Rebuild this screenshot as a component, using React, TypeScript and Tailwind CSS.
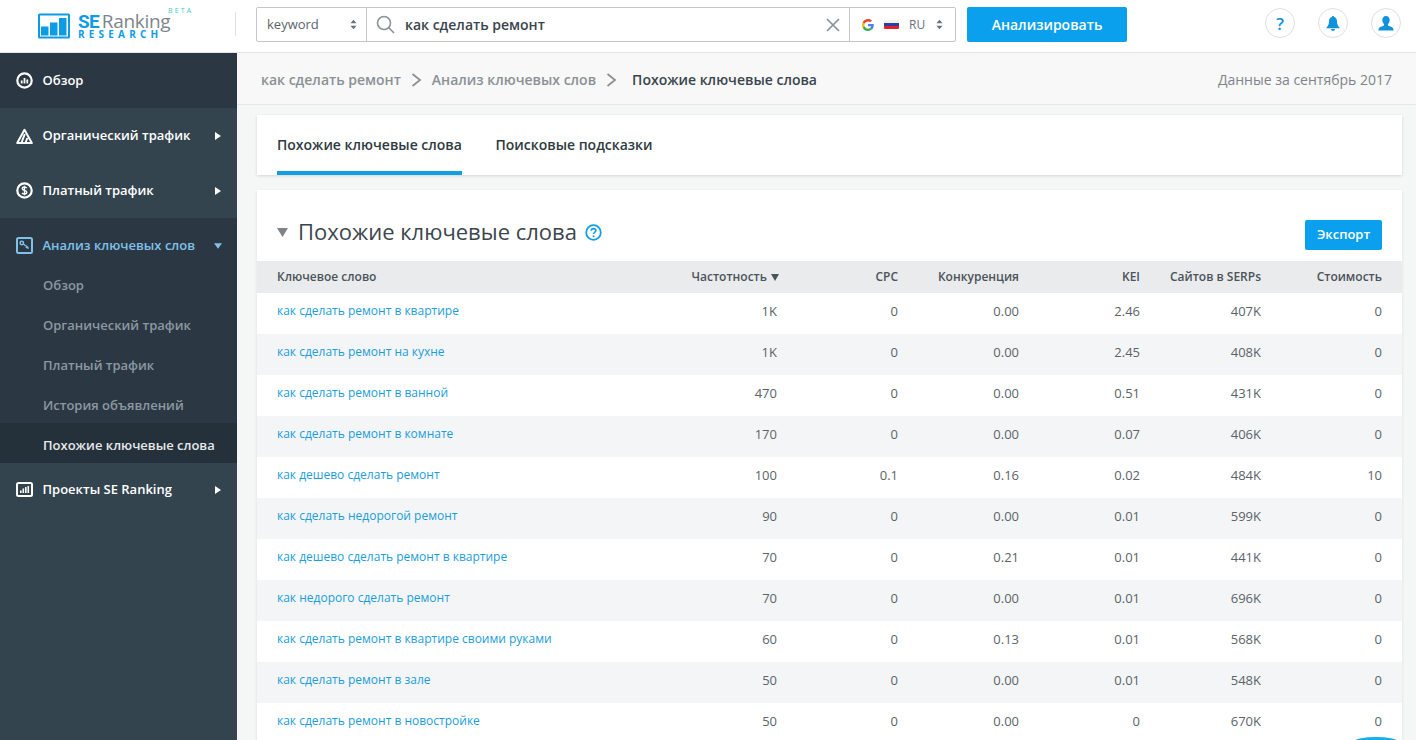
import React from "react";

const rows = [
  ["как сделать ремонт в квартире", "1K", "0", "0.00", "2.46", "407K", "0"],
  ["как сделать ремонт на кухне", "1K", "0", "0.00", "2.45", "408K", "0"],
  ["как сделать ремонт в ванной", "470", "0", "0.00", "0.51", "431K", "0"],
  ["как сделать ремонт в комнате", "170", "0", "0.00", "0.07", "406K", "0"],
  ["как дешево сделать ремонт", "100", "0.1", "0.16", "0.02", "484K", "10"],
  ["как сделать недорогой ремонт", "90", "0", "0.00", "0.01", "599K", "0"],
  ["как дешево сделать ремонт в квартире", "70", "0", "0.21", "0.01", "441K", "0"],
  ["как недорого сделать ремонт", "70", "0", "0.00", "0.01", "696K", "0"],
  ["как сделать ремонт в квартире своими руками", "60", "0", "0.13", "0.01", "568K", "0"],
  ["как сделать ремонт в зале", "50", "0", "0.00", "0.01", "548K", "0"],
  ["как сделать ремонт в новостройке", "50", "0", "0.00", "0", "670K", "0"],
];

const Updown = () => (
  <svg width="7" height="11" viewBox="0 0 8 12" className="fill-[#6b7177]">
    <path d="M4 0.5 7.5 4.5H.5zM4 11.5.5 7.500h7z" />
  </svg>
);

const ArrowR = () => (
  <svg width="6" height="8" viewBox="0 0 6 8" className="fill-white"><path d="M0 0l6 4-6 4z" /></svg>
);

const Chev = () => (
  <svg width="11" height="14" viewBox="0 0 11 14" fill="none" stroke="#8a9196" strokeWidth="1.8"><path d="M1.5 1l7.5 6-7.5 6" /></svg>
);

const IconOverview = () => (
  <svg width="17" height="17" viewBox="0 0 17 17" fill="none">
    <circle cx="8.500" cy="8.500" r="7.200" stroke="white" strokeWidth="2.200" />
    <path d="M5.700 8.500v3M8.500 6v5.500M11.300 7.500v4" stroke="white" strokeWidth="1.800" />
  </svg>
);
const IconOrganic = () => (
  <svg width="17" height="16" viewBox="0 0 17 16" fill="none">
    <path d="M8.500 1.800 15.800 15H1.200z" stroke="white" strokeWidth="2" strokeLinejoin="round" />
    <path d="M8.800 6 5.400 15M11.300 10l-1.800 5" stroke="white" strokeWidth="2" />
  </svg>
);
const IconPaid = () => (
  <svg width="17" height="17" viewBox="0 0 17 17" fill="none">
    <circle cx="8.500" cy="8.500" r="7.200" stroke="white" strokeWidth="2.200" />
    <path d="M10.800 6.200C10.300 5.400 9.400 5 8.500 5 7.300 5 6.300 5.700 6.300 6.700c0 2.200 4.500 1.200 4.500 3.500 0 1-1 1.800-2.300 1.800-1 0-1.900-.4-2.400-1.200M8.500 3.800v9.400" stroke="white" strokeWidth="1.400" />
  </svg>
);
const IconAnalysis = () => (
  <svg width="17" height="17" viewBox="0 0 17 17" fill="none" stroke="#7fc1ea">
    <rect x="1" y="1" width="15" height="15" rx="1.500" strokeWidth="2" />
    <circle cx="5.800" cy="6" r="1.700" strokeWidth="1.500" />
    <path d="M7.200 7l5 3.500M11 9.600 10 11M12.400 10.500l-.8 1.200" strokeWidth="1.500" />
  </svg>
);
const IconProjects = () => (
  <svg width="17" height="15" viewBox="0 0 17 15" fill="none">
    <rect x="1" y="1" width="15" height="13" rx="1.500" stroke="white" strokeWidth="2" />
    <path d="M4.800 11V8.500M7.300 11V6.500M9.800 11V5M12.300 11V4" stroke="white" strokeWidth="1.600" />
  </svg>
);

function NavItem({ icon, label, arrow = true, dark = false, blue = false, open = false, h = "h-[55px]" }: any) {
  return (
    <div className={`${h} flex items-center pl-[16px] pr-[16px] ${dark ? "bg-[#2b3843]" : ""}`}>
      <span className="w-[17px] flex justify-center shrink-0">{icon}</span>
      <span className={`ml-[9.500px] text-[13px] font-semibold flex-1 ${blue ? "text-[#7fc1ea]" : "text-white"}`}>{label}</span>
      {arrow && !open && <ArrowR />}
      {open && (
        <svg width="8" height="6" viewBox="0 0 9 6" className="fill-[#7fc1ea] mr-[-1px]"><path d="M0 0h9L4.500 6z" /></svg>
      )}
    </div>
  );
}

function SubItem({ label, active = false }: { label: string; active?: boolean }) {
  return (
    <div className={`h-[40px] flex items-center pl-[43px] pt-[6px] text-[13px] font-semibold ${active ? "bg-[#24303a] text-[#e6e9eb]" : "text-[#8c98a1]"}`}>
      {label}
    </div>
  );
}

const RoundBtn = ({ children }: { children: React.ReactNode }) => (
  <div className="w-[30px] h-[30px] rounded-full border border-[#dcdfe1] flex items-center justify-center">{children}</div>
);

export default function App() {
  return (
    <div className="h-screen w-full overflow-hidden relative flex flex-col bg-[#f6f7f7] text-[#3a444c] font-['Open_Sans',sans-serif]">
      {/* header */}
      <header className="h-[53px] shrink-0 bg-white border-b border-[#e2e4e5] flex items-center">
        <div className="w-[237px] shrink-0 h-full flex items-center relative">
          <div className="ml-[38px] flex items-center">
            <svg width="32" height="26" viewBox="0 0 32 26">
              <rect x="0" y="0.500" width="32" height="25" rx="1.500" fill="#0e9be6" />
              <rect x="2" y="2.500" width="28" height="21" fill="white" />
              <rect x="3" y="13.500" width="7.500" height="9" fill="#0e9be6" />
              <rect x="12" y="9.500" width="7.500" height="13" fill="#0e9be6" />
              <rect x="21" y="5" width="7.500" height="17.500" fill="#0e9be6" />
            </svg>
            <div className="ml-[8px] relative w-[92px] h-[32px]">
              <div className="absolute left-0 top-[4px] text-[19px] leading-[15px] whitespace-nowrap tracking-[-0.3px]">
                <span className="font-bold text-[#0e9be6] font-['Roboto',sans-serif] tracking-[-0.8px]">SE</span>
                <span className="text-[#7c858c] ml-[3px]">Ranking</span>
              </div>
              <div className="absolute left-0 top-[19px] text-[10px] leading-[10px] font-bold text-[#0e9be6] tracking-[4.2px] whitespace-nowrap">RESEARCH</div>
              <div className="absolute left-[90px] top-[-3px] text-[7px] leading-[7px] text-[#3fc9c4] tracking-[2.2px]">BETA</div>
            </div>
          </div>
          <div className="absolute right-[1px] top-[12px] h-[24px] w-px bg-[#dfe1e2]" />
        </div>
        <div className="ml-[19px] mb-[3px] h-[35px] w-[700px] flex border border-[#c4c7c9] rounded-[2px] bg-white">
          <div className="w-[110px] shrink-0 flex items-center justify-between pl-[10px] pr-[9px] border-r border-[#c4c7c9]">
            <span className="text-[13px] text-[#5c6369]">keyword</span>
            <Updown />
          </div>
          <div className="flex-1 flex items-center pl-[9px] pr-[9px]">
            <svg width="19" height="19" viewBox="0 0 19 19" fill="none" stroke="#8b9196" strokeWidth="1.6">
              <circle cx="8" cy="8" r="6.500" /><path d="M12.800 12.800 18 18" />
            </svg>
            <span className="ml-[10px] text-[14px] font-semibold text-[#3a444c] flex-1">как сделать ремонт</span>
            <svg width="14" height="14" viewBox="0 0 14 14" stroke="#8a9196" strokeWidth="1.700"><path d="M1 1l12 12M13 1 1 13" /></svg>
          </div>
          <div className="w-[106px] shrink-0 flex items-center pl-[12px] pr-[12px] border-l border-[#c4c7c9]">
            <svg width="12" height="12" viewBox="0 0 48 48">
              <path fill="#EA4335" d="M24 9.500c3.500 0 6.700 1.300 9.200 3.400l6.800-6.800C35.900 2.400 30.300 0 24 0 14.600 0 6.500 5.400 2.600 13.200l7.900 6.100C12.400 13.600 17.700 9.500 24 9.500z" />
              <path fill="#4285F4" d="M47 24.500c0-1.600-.2-3.200-.5-4.700H24v9h12.900c-.6 3-2.300 5.500-4.800 7.200l7.700 6C44.300 37.900 47 31.700 47 24.500z" />
              <path fill="#FBBC05" d="M10.500 28.700c-.5-1.400-.8-3-.8-4.700s.3-3.200.8-4.700l-7.900-6.100C1 16.500 0 20.100 0 24s1 7.500 2.600 10.800z" />
              <path fill="#34A853" d="M24 48c6.500 0 11.900-2.100 15.800-5.800l-7.700-6c-2.100 1.400-4.900 2.300-8.100 2.300-6.300 0-11.600-4.100-13.500-9.800l-7.900 6.100C6.500 42.600 14.600 48 24 48z" />
            </svg>
            <div className="ml-[10px] w-[15px] h-[9px] flex flex-col rounded-[1px] overflow-hidden">
              <div className="h-[3px] bg-[#f2f2f4]" /><div className="h-[3px] bg-[#2a3fa5]" /><div className="h-[3px] bg-[#e0202f]" />
            </div>
            <span className="ml-[10px] text-[12px] text-[#6b7177] flex-1">RU</span>
            <Updown />
          </div>
        </div>
        <div className="ml-[11px] mb-[3px] w-[160px] h-[35px] rounded-[2px] bg-[#0ba0ee] text-white text-[14px] font-semibold flex items-center justify-center">Анализировать</div>
        <div className="ml-auto mr-[15px] mb-[6px] flex gap-[23px]">
          <RoundBtn><span className="text-[17px] font-semibold text-[#1192dc] leading-none">?</span></RoundBtn>
          <RoundBtn>
            <svg width="14" height="15" viewBox="0 0 14 15" fill="#1192dc"><path d="M7 0c.7 0 1.100.5 1.100 1.100C10 1.600 11 3.200 11 5.200c0 3.300 1 4.800 2.500 6.300v.8H.5v-.8C2 10 3 8.500 3 5.200 3 3.200 4 1.600 5.900 1.100 5.900.5 6.300 0 7 0zM5 13h4a2 2 0 0 1-4 0z" /></svg>
          </RoundBtn>
          <RoundBtn>
            <svg width="16" height="15" viewBox="0 0 16 15" fill="#1192dc"><path d="M8 0c2.300 0 3.700 1.700 3.700 4 0 1.600-.7 3.200-1.700 4.200v1.300c2 .8 5 1.700 5.500 3.500v1.500H.5V13C1 11.200 4 10.300 6 9.500V8.200C5 7.200 4.300 5.600 4.300 4 4.300 1.700 5.700 0 8 0z" /></svg>
          </RoundBtn>
        </div>
      </header>

      <div className="flex-1 min-h-0 flex">
        {/* sidebar */}
        <aside className="w-[237px] shrink-0 bg-[#33444f]">
          <NavItem icon={<IconOverview />} label="Обзор" arrow={false} dark />
          <NavItem icon={<IconOrganic />} label="Органический трафик" />
          <NavItem icon={<IconPaid />} label="Платный трафик" />
          <div className="bg-[#2b3843]">
            <NavItem icon={<IconAnalysis />} label="Анализ ключевых слов" blue open />
            <div className="mt-[-10px]">
              <SubItem label="Обзор" />
              <SubItem label="Органический трафик" />
              <SubItem label="Платный трафик" />
              <SubItem label="История объявлений" />
              <SubItem label="Похожие ключевые слова" active />
            </div>
          </div>
          <NavItem icon={<IconProjects />} label="Проекты SE Ranking" h="h-[53px]" />
        </aside>

        {/* main */}
        <main className="flex-1 min-w-0 flex flex-col">
          <div className="h-[52px] shrink-0 bg-[#f8f8f8] border-b border-[#e6e7e8] flex items-center pl-[24px] pr-[24px] pt-[2px] text-[14px]">
            <span className="font-semibold text-[#8a9196]">как сделать ремонт</span>
            <span className="mx-[10px] flex"><Chev /></span>
            <span className="font-semibold text-[#8a9196]">Анализ ключевых слов</span>
            <span className="ml-[10px] mr-[15px] flex"><Chev /></span>
            <span className="font-semibold text-[#3a444c]">Похожие ключевые слова</span>
            <span className="ml-auto text-[#7d848a]">Данные за сентябрь 2017</span>
          </div>

          <div className="flex-1 min-h-0 pl-[20px] pr-[14px] pt-[10px] bg-[#f5f6f6]">
            <div className="h-[60px] bg-white shadow-[0_1px_3px_rgba(0,0,0,0.14)] flex pl-[20px] gap-[33.5px]">
              <div className="h-full border-b-[4px] border-[#119fe3] flex items-center text-[14px] font-semibold text-[#2f3a42] pt-[3px]">Похожие ключевые слова</div>
              <div className="h-full flex items-center text-[14px] font-semibold text-[#2f3a42] pb-[1px]">Поисковые подсказки</div>
            </div>

            <div className="mt-[15px] bg-white shadow-[0_1px_3px_rgba(0,0,0,0.1)]">
              <div className="h-[71px] flex items-start pl-[20px] pr-[20px]">
                <svg width="11" height="9" viewBox="0 0 11 9" className="mt-[38px] fill-[#7d858b]"><path d="M0 0h11L5.500 9z" /></svg>
                <span className="ml-[10px] mt-[25px] text-[22px] leading-[32px] text-[#3c464e]">Похожие ключевые слова</span>
                <svg width="17" height="17" viewBox="0 0 17 17" fill="none" className="ml-[8px] mt-[34px]">
                  <circle cx="8.500" cy="8.500" r="7.300" stroke="#119fe3" strokeWidth="1.800" />
                  <path d="M6.200 6.800c0-1.400 1-2.200 2.300-2.200s2.300.8 2.300 2c0 1.700-2.300 1.700-2.300 3.400" stroke="#119fe3" strokeWidth="1.600" />
                  <circle cx="8.500" cy="12.200" r="1" fill="#119fe3" />
                </svg>
                <div className="ml-auto mt-[30px] w-[77px] h-[30px] rounded-[2px] bg-[#0ba0ee] text-white text-[13px] font-semibold flex items-center justify-center">Экспорт</div>
              </div>

              <div className="h-[32px] bg-[#eaebec] grid grid-cols-[379px_121px_121px_121px_121px_121px_121px] px-[20px] items-center text-[12px] font-semibold text-[#4b545b]">
                <div>Ключевое слово</div>
                <div className="mr-[-2px] flex items-center justify-end">
                  <span>Частотность</span>
                  <svg width="8" height="7" viewBox="0 0 8 7" className="ml-[4px] fill-[#4b545b]"><path d="M0 0h8L4 7z" /></svg>
                </div>
                <div className="text-right">CPC</div>
                <div className="text-right">Конкуренция</div>
                <div className="text-right">KEI</div>
                <div className="text-right">Сайтов в SERPs</div>
                <div className="text-right">Стоимость</div>
              </div>

              {rows.map((r, i) => (
                <div key={i} className={`h-[41px] grid grid-cols-[379px_121px_121px_121px_121px_121px_121px] px-[20px] items-center text-[13px] text-[#5a636a] ${i % 2 ? "bg-[#f4f5f6]" : "bg-white"}`}>
                  <div className="text-[12px] text-[#1a9ddb] whitespace-nowrap pb-[5px]">{r[0]}</div>
                  {r.slice(1).map((c, j) => (
                    <div key={j} className="text-right pb-[4px]">{c}</div>
                  ))}
                </div>
              ))}
            </div>
          </div>
        </main>
      </div>

      <div className="absolute left-[1355px] top-[737px] w-[42px] h-[20px] rounded-[21px/4px] bg-[#19ade8]" />
    </div>
  );
}
